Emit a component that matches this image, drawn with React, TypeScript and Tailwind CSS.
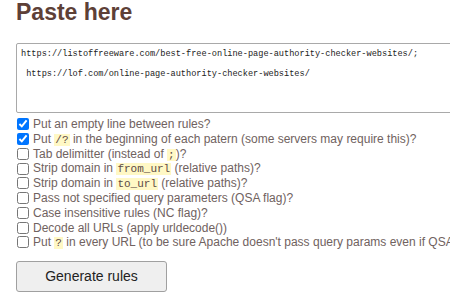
import React from "react";

const rows: { checked?: boolean; parts: (string | { code: string })[] }[] = [
  { checked: true, parts: ["Put an empty line between rules?"] },
  { checked: true, parts: ["Put ", { code: "/?" }, " in the beginning of each patern (some servers may require this)?"] },
  { parts: ["Tab delimitter (instead of ", { code: ";" }, ")?"] },
  { parts: ["Strip domain in ", { code: "from_url" }, " (relative paths)?"] },
  { parts: ["Strip domain in ", { code: "to_url" }, " (relative paths)?"] },
  { parts: ["Pass not specified query parameters (QSA flag)?"] },
  { parts: ["Case insensitive rules (NC flag)?"] },
  { parts: ["Decode all URLs (apply urldecode())"] },
  { parts: ["Put ", { code: "?" }, " in every URL (to be sure Apache doesn't pass query params even if QSA is not set)?"] },
];

const urls =
  "https://listoffreeware.com/best-free-online-page-authority-checker-websites/;\n\n https://lof.com/online-page-authority-checker-websites/";

export default function App() {
  return (
    <div className="w-[450px] h-[308px] overflow-hidden bg-white pl-4 font-['Liberation_Sans',Arial,sans-serif]">
      {/* Heading */}
      <h1 className="mt-[1px] text-[23px] leading-[23px] font-bold text-[#5d4037]">Paste here</h1>

      {/* Input */}
      <textarea
        readOnly
        value={urls}
        className="mt-[19px] block w-[470px] h-[70px] resize-none border border-[#a9a9a9] rounded-[2px] bg-white pl-[4px] pt-[5px] text-[8.6px] leading-[10px] text-[#222] font-['Liberation_Mono','DejaVu_Sans_Mono',monospace] outline-none overflow-hidden whitespace-pre"
      />

      {/* Options */}
      <div className="mt-[4px] text-[12px] text-[#706260] whitespace-nowrap">
        {rows.map((r, i) => (
          <label key={i} className="flex items-center h-[14.75px]">
            <input
              type="checkbox"
              defaultChecked={r.checked}
              className="m-0 ml-[1px] mr-[4px] w-[12px] h-[12px] accent-[#0075ff] shrink-0"
            />
            <span>
              {r.parts.map((p, j) =>
                typeof p === "string" ? (
                  <span key={j}>{p}</span>
                ) : (
                  <code
                    key={j}
                    className="bg-[#fff8c5] px-[1px] text-[11px] text-[#5d4a45] font-['Liberation_Mono','DejaVu_Sans_Mono',monospace]"
                  >
                    {p.code}
                  </code>
                )
              )}
            </span>
          </label>
        ))}
      </div>

      {/* Action */}
      <button className="mt-[11px] w-[151px] h-[31px] border border-[#a0a0a0] rounded-[3px] bg-[#efefef] text-[14px] text-[#222]">
        Generate rules
      </button>
    </div>
  );
}
